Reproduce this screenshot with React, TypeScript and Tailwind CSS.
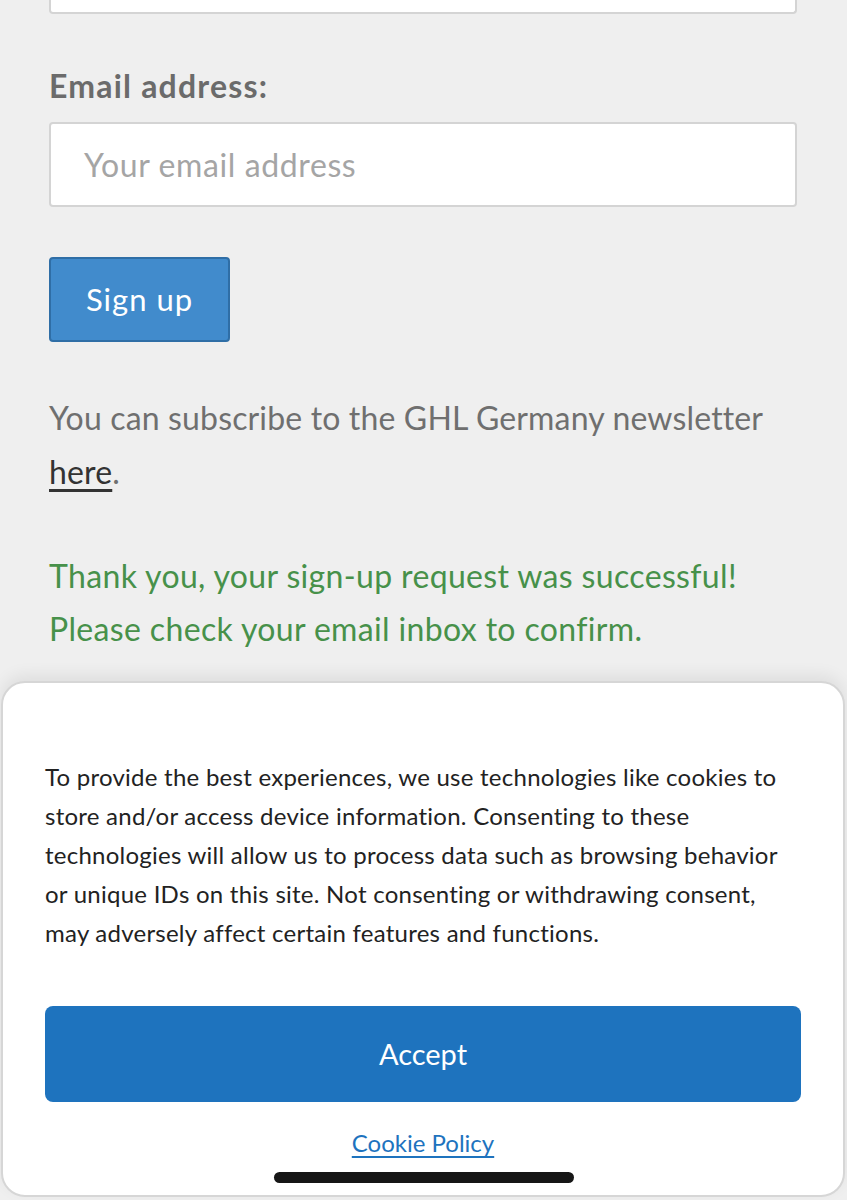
import React from 'react';

const App = () => {
  return (
    <div className="relative h-[1200px] w-[847px] overflow-hidden bg-[#efefef] font-['Lato','Noto_Sans',sans-serif]">
      <div className="px-[49px] pr-[50px]">
        {/* bottom of the previous field */}
        <div className="h-[14px] rounded-b-[4px] border-2 border-t-0 border-[#d4d4d4] bg-white" />

        <label className="mt-[52px] block text-[32px] font-bold leading-[40px] tracking-[1.2px] text-[#6b6b6b]">
          Email address:
        </label>

        <div className="mt-[16px] flex h-[85px] items-center rounded-[4px] border-2 border-[#d4d4d4] bg-white px-[33px]">
          <span className="text-[32px] tracking-[0.6px] text-[#a5a5a5]">Your email address</span>
        </div>

        <button className="mt-[50px] flex h-[85px] w-[181px] items-center justify-center rounded-[4px] border-2 border-[#2f6ea6] bg-[#418bcc] text-[31px] tracking-[1px] text-white">
          Sign up
        </button>

        <p className="mt-[49px] text-[32px] leading-[54px] tracking-[0.15px] text-[#6f6f6f]">
          You can subscribe to the GHL Germany newsletter{' '}
          <a className="text-[#333] underline underline-offset-[5px]">here</a>.
        </p>

        <p className="mt-[50px] text-[32px] leading-[53px] tracking-[0.35px] text-[#47914a]">
          Thank you, your sign-up request was successful! Please check your email inbox to confirm.
        </p>
      </div>

      {/* cookie consent banner */}
      <div className="absolute bottom-[3px] left-[1px] right-[2px] h-[516px] rounded-[24px] border-2 border-[#d6d6d6] bg-white px-[42px] pt-[74px] shadow-[0_-6px_16px_rgba(0,0,0,0.07)]">
        <p className="text-[24px] leading-[39px] tracking-[0.25px] text-[#222]">
          To provide the best experiences, we use technologies like cookies to store and/or access device
          information. Consenting to these technologies will allow us to process data such as browsing behavior or
          unique IDs on this site. Not consenting or withdrawing consent, may adversely affect certain features and
          functions.
        </p>
        <button className="mt-[54px] flex h-[96px] w-full items-center justify-center rounded-[8px] bg-[#1e73be] text-[29px] text-white">
          Accept
        </button>
        <div className="mt-[23px] text-center">
          <a className="text-[24px] text-[#1e73be] underline underline-offset-[4px]">Cookie Policy</a>
        </div>
      </div>

      <div className="absolute bottom-[17px] left-[274px] h-[11px] w-[300px] rounded-full bg-[#161616]" />
    </div>
  );
};

export default App;
